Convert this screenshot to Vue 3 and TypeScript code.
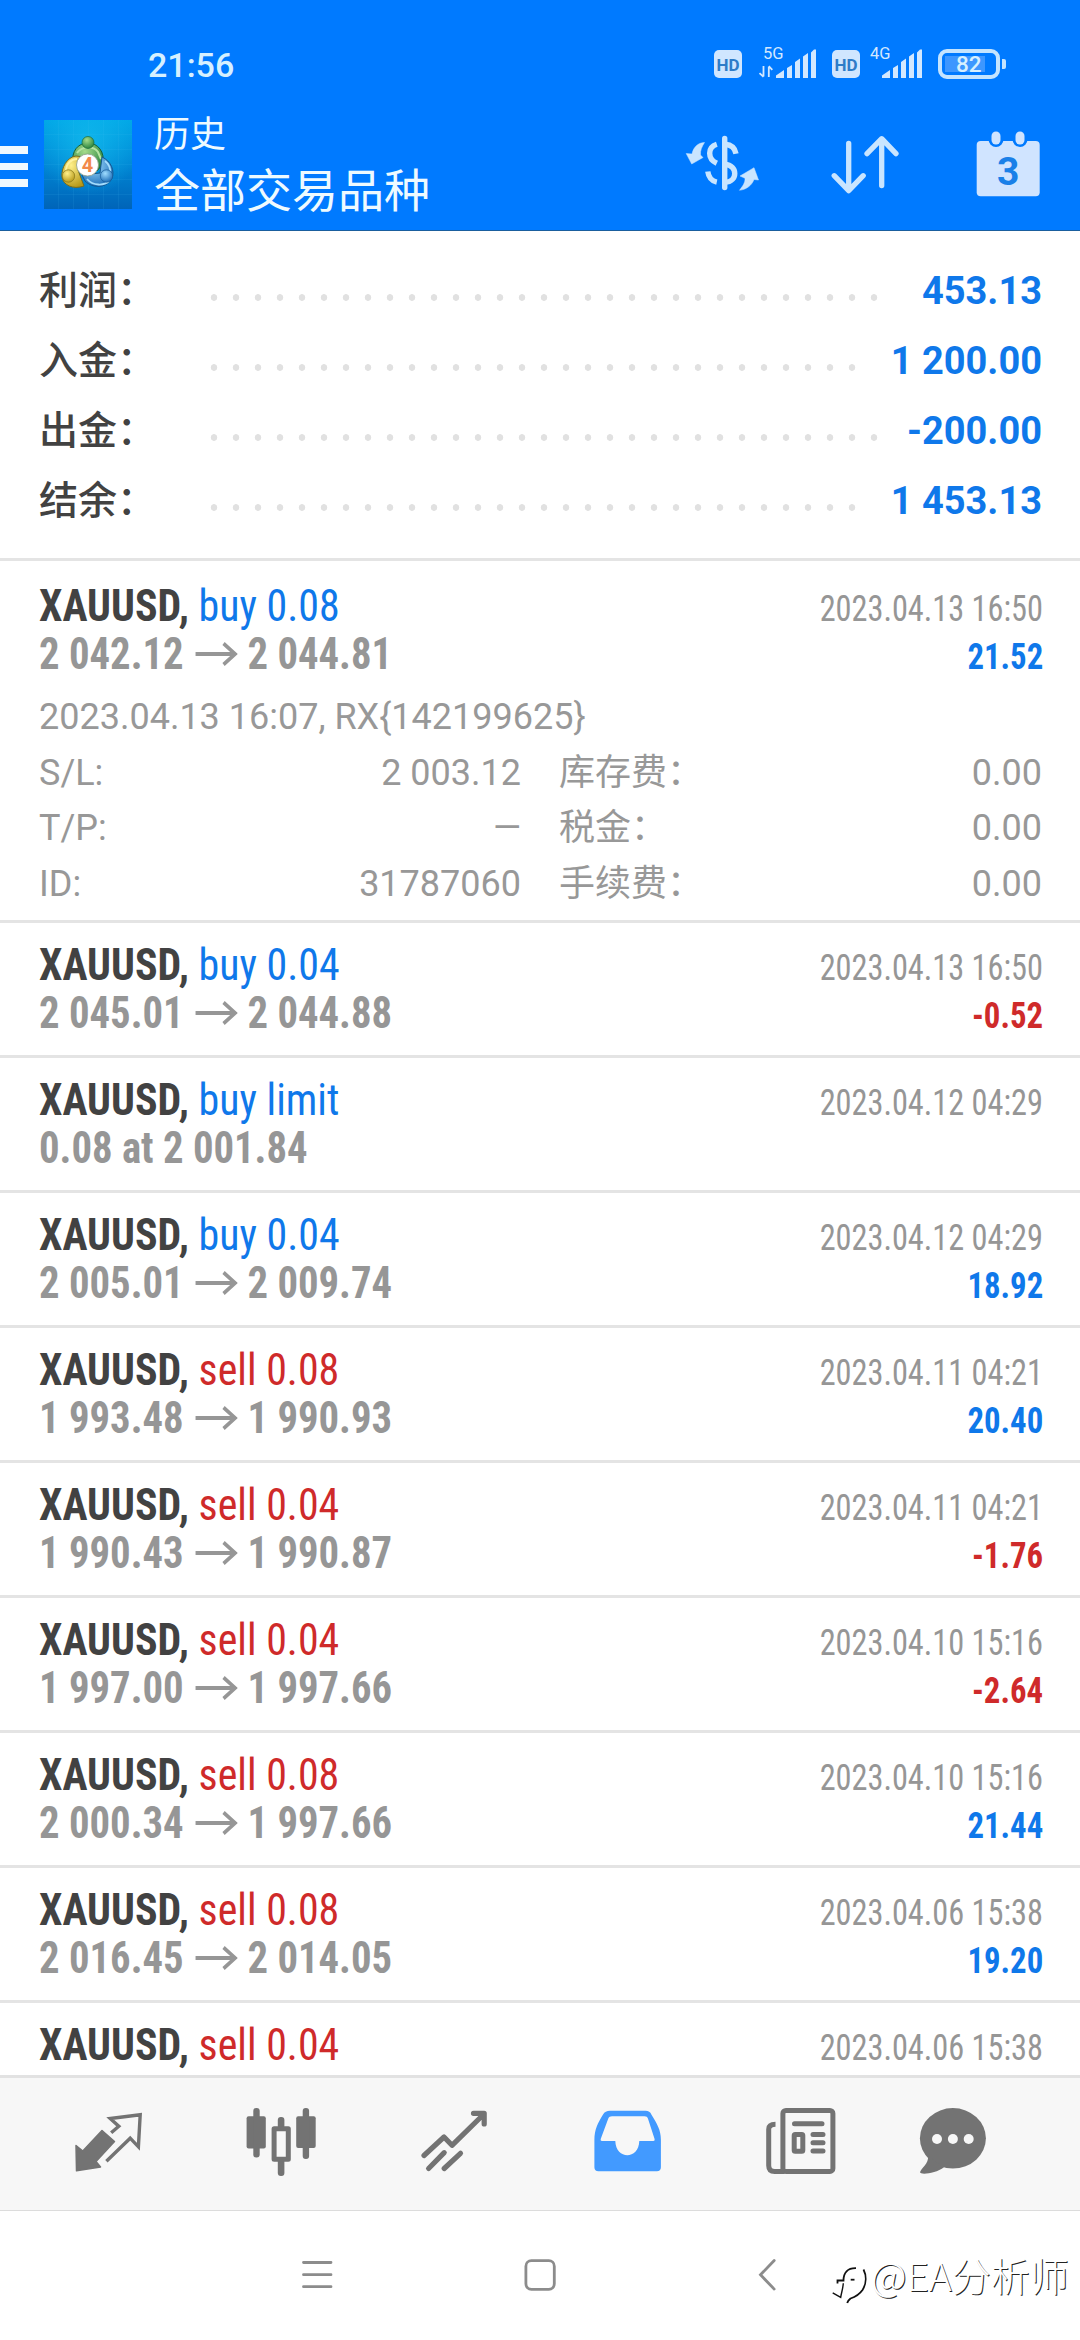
<script setup lang="ts">
interface SummaryLine {
  label: string
  value: string
  dots: number
}

interface Detail {
  label: string
  value: string
}

interface Deal {
  symbol: string
  action: string
  side: 'buy' | 'sell'
  from?: string
  to?: string
  time: string
  profit?: string
  comment?: string
  details?: Detail[]
}

const DOT_PITCH = 22

const summary: SummaryLine[] = [
  { label: '利润：', value: '453.13', dots: 31 },
  { label: '入金：', value: '1 200.00', dots: 30 },
  { label: '出金：', value: '-200.00', dots: 31 },
  { label: '结余：', value: '1 453.13', dots: 30 },
]

const deals: Deal[] = [
  {
    symbol: 'XAUUSD', action: 'buy 0.08', side: 'buy', from: '2 042.12', to: '2 044.81',
    time: '2023.04.13 16:50', profit: '21.52',
    comment: '2023.04.13 16:07, RX{142199625}',
    details: [
      { label: 'S/L:', value: '2 003.12' },
      { label: '库存费：', value: '0.00' },
      { label: 'T/P:', value: '—' },
      { label: '税金：', value: '0.00' },
      { label: 'ID:', value: '31787060' },
      { label: '手续费：', value: '0.00' },
    ],
  },
  { symbol: 'XAUUSD', action: 'buy 0.04', side: 'buy', from: '2 045.01', to: '2 044.88', time: '2023.04.13 16:50', profit: '-0.52' },
  { symbol: 'XAUUSD', action: 'buy limit', side: 'buy', from: '0.08 at 2 001.84', time: '2023.04.12 04:29' },
  { symbol: 'XAUUSD', action: 'buy 0.04', side: 'buy', from: '2 005.01', to: '2 009.74', time: '2023.04.12 04:29', profit: '18.92' },
  { symbol: 'XAUUSD', action: 'sell 0.08', side: 'sell', from: '1 993.48', to: '1 990.93', time: '2023.04.11 04:21', profit: '20.40' },
  { symbol: 'XAUUSD', action: 'sell 0.04', side: 'sell', from: '1 990.43', to: '1 990.87', time: '2023.04.11 04:21', profit: '-1.76' },
  { symbol: 'XAUUSD', action: 'sell 0.04', side: 'sell', from: '1 997.00', to: '1 997.66', time: '2023.04.10 15:16', profit: '-2.64' },
  { symbol: 'XAUUSD', action: 'sell 0.08', side: 'sell', from: '2 000.34', to: '1 997.66', time: '2023.04.10 15:16', profit: '21.44' },
  { symbol: 'XAUUSD', action: 'sell 0.08', side: 'sell', from: '2 016.45', to: '2 014.05', time: '2023.04.06 15:38', profit: '19.20' },
  { symbol: 'XAUUSD', action: 'sell 0.04', side: 'sell', time: '2023.04.06 15:38' },
]

const isLoss = (profit: string) => profit.startsWith('-')
</script>

<template>
  <div class="screen">
    <header class="header">
      <div class="status">
        <span class="clock">21:56</span>
        <div class="indicators">
          <span class="hd">HD</span>
          <div class="signal">
            <span class="net">5G</span>
            <svg width="60" height="32" viewBox="757 47 60 32">
              <path d="M763.5 66v10.5M763.5 76.8l-4-3.6M768.8 77V66.8M768.8 66.2l3.5 3.6" stroke="#d3e8ff" stroke-width="1.8" fill="none" />
              <path d="M776 78v-2.500l8-5.500v8zM787 78V68l5-3v13zM795 78V62l5-3.500V78zM803 78V56.500l5-3.500V78zM811 78V52.500l3-3h2V78z" fill="#d3e8ff" />
            </svg>
          </div>
          <span class="hd hd-second">HD</span>
          <div class="signal">
            <span class="net net-4g">4G</span>
            <svg width="60" height="32" viewBox="757 47 60 32">
              <path d="M776 78v-2.500l8-5.500v8zM787 78V68l5-3v13zM795 78V62l5-3.500V78zM803 78V56.500l5-3.500V78zM811 78V52.500l3-3h2V78z" fill="#d3e8ff" />
            </svg>
          </div>
          <div class="battery"><span class="level">82</span></div>
          <i class="nub"></i>
        </div>
      </div>

      <div class="toolbar">
        <div class="menu"><i></i><i></i><i></i></div>
        <svg class="logo" width="88" height="89" viewBox="0 0 88 89">
          <defs>
            <linearGradient id="sky" x1="0" y1="0" x2="0" y2="1">
              <stop offset="0" stop-color="#00a6e6" />
              <stop offset="0.5" stop-color="#0086d4" />
              <stop offset="1" stop-color="#0064b8" />
            </linearGradient>
            <radialGradient id="glow" cx="0.5" cy="0.25" r="0.6">
              <stop offset="0" stop-color="#16c0f0" stop-opacity="0.7" />
              <stop offset="1" stop-color="#16c0f0" stop-opacity="0" />
            </radialGradient>
            <radialGradient id="green" cx="0.4" cy="0.3" r="0.75"><stop offset="0" stop-color="#a5dc8c" /><stop offset="1" stop-color="#23803a" /></radialGradient>
            <radialGradient id="gold" cx="0.4" cy="0.3" r="0.75"><stop offset="0" stop-color="#fff08a" /><stop offset="1" stop-color="#b59716" /></radialGradient>
            <radialGradient id="blue" cx="0.4" cy="0.3" r="0.75"><stop offset="0" stop-color="#9fdcff" /><stop offset="1" stop-color="#1668b4" /></radialGradient>
          </defs>
          <rect width="88" height="89" fill="url(#sky)" />
          <rect width="88" height="89" fill="url(#glow)" />
          <path d="M14.500 0v89M29.500 0v89M44.500 0v89M59.500 0v89M74.500 0v89M0 14.500h88M0 29.500h88M0 44.500h88M0 59.500h88M0 74.500h88" stroke="#4cc4f5" stroke-opacity="0.1" />
          <path d="M29 44C27 31 34 23 44 23s17 9 15 21l-6 7-9-16z" fill="url(#green)" stroke="#155f38" stroke-width="1" />
          <path d="M33 33c4-6 16-8 21-1l3 7" fill="none" stroke="#b5e3a2" stroke-width="2" />
          <path d="M40 66c-11 4-21-1-22-9-1-9 5-20 14-21l9 1-7 13z" fill="url(#gold)" stroke="#746b20" stroke-width="1" />
          <path d="M22 51c0-7 5-12 11-12" fill="none" stroke="#fff2a0" stroke-width="2" />
          <path d="M58 37c9 4 13 14 10 21-4 10-19 11-27 3l-3-6 18-2z" fill="url(#blue)" stroke="#15568f" stroke-width="1" />
          <path d="M43 59c6 7 17 7 22 2M61 41c4 3 6 8 5 12" fill="none" stroke="#a4dcfb" stroke-width="1.800" />
          <circle cx="44" cy="22.500" r="6" fill="url(#green)" stroke="#1c6a38" stroke-width="0.700" />
          <circle cx="24.500" cy="56" r="6.200" fill="url(#gold)" stroke="#85751b" stroke-width="0.700" />
          <circle cx="62.500" cy="56" r="6.200" fill="url(#blue)" stroke="#175a96" stroke-width="0.700" />
          <circle cx="43.500" cy="45" r="11" fill="#fff" stroke="#8b9c86" stroke-width="0.800" />
          <text x="43.500" y="52" text-anchor="middle" class="logo-digit">4</text>
        </svg>
        <div class="titles">
          <div class="title">历史</div>
          <div class="subtitle">全部交易品种</div>
        </div>
        <div class="actions">
          <svg width="76" height="70" viewBox="684 130 76 70">
            <g fill="none" stroke="#c9e5ff" stroke-width="5.400">
              <path d="M724.700 138.500v49" stroke-linecap="round" />
              <path d="M716.800 144.200c-9.500 3-9.500 14.500 0 19" />
              <path d="M707.800 171.500c.6 5 3.700 9.500 9 10.600" />
              <path d="M725 144.300c6 .5 10 3.500 11 9.500" />
              <path d="M725 164.500c13 .5 13 17.500 0 17.800" />
            </g>
            <g fill="#c9e5ff" stroke="#c9e5ff" stroke-width="0.500" stroke-linejoin="round">
              <path d="M704.500 142.500c-6 .3-11 4-12.500 11.500l-5.800-.5 5.500 10.500 11.300-6.500-2.500-2.500c-.5-4.500 1.500-8.500 4-12.500z" />
              <path d="M739.500 190.300c6.500-.8 12-4.300 14.500-10.800l4.500.5-4.500-12.300-14 8.300 5 2.300c.3 4.500-2.500 8-5.500 12z" />
            </g>
          </svg>
          <svg width="76" height="70" viewBox="827 130 76 70">
            <g fill="none" stroke="#c9e5ff" stroke-width="5.300" stroke-linecap="round" stroke-linejoin="round">
              <path d="M848.700 143.500v46M834.200 175.700l14.500 15 14.500-15" />
              <path d="M881.700 185.500v-46M867 153.700l14.700-15 14.300 15" />
            </g>
          </svg>
          <svg width="76" height="70" viewBox="970 130 76 70">
            <rect x="976.700" y="141" width="63" height="55.300" rx="4" fill="#d0e4ff" />
            <rect x="988.500" y="127" width="15" height="20" rx="7.500" fill="#007aff" />
            <rect x="1012.500" y="127" width="15" height="20" rx="7.500" fill="#007aff" />
            <rect x="991.500" y="131.500" width="9" height="13" rx="4.500" fill="#d0e4ff" />
            <rect x="1015.500" y="131.500" width="9" height="13" rx="4.500" fill="#d0e4ff" />
            <text x="1008.300" y="184.500" text-anchor="middle" class="cal-digit">3</text>
          </svg>
        </div>
      </div>
    </header>

    <section class="summary">
      <div v-for="line in summary" :key="line.label" class="sum-line">
        <span class="sum-label">{{ line.label }}</span>
        <i class="dots" :style="{ width: line.dots * DOT_PITCH + 'px' }"></i>
        <span class="sum-value">{{ line.value }}</span>
      </div>
    </section>

    <main class="list">
      <article v-for="(deal, i) in deals" :key="i" class="deal">
        <div class="line">
          <span class="name">{{ deal.symbol }}, <span :class="deal.side">{{ deal.action }}</span></span>
          <span class="time">{{ deal.time }}</span>
        </div>
        <div v-if="deal.from" class="line">
          <span class="prices">
            <span>{{ deal.from }}</span>
            <template v-if="deal.to">
              <svg class="arrow" width="46" height="26" viewBox="0 0 46 26">
                <path d="M0 13h43M30.500 2.500l12.500 10.500-12.500 10.500" fill="none" stroke="#969696" stroke-width="3.800" />
              </svg>
              <span>{{ deal.to }}</span>
            </template>
          </span>
          <span v-if="deal.profit" class="profit" :class="{ loss: isLoss(deal.profit) }">{{ deal.profit }}</span>
        </div>
        <template v-if="deal.details">
          <div class="comment">{{ deal.comment }}</div>
          <div class="details">
            <div v-for="d in deal.details" :key="d.label" class="detail">
              <span>{{ d.label }}</span><span>{{ d.value }}</span>
            </div>
          </div>
        </template>
      </article>
    </main>

    <nav class="tabs">
      <svg width="80" height="80" viewBox="68 24 80 80">
        <path d="M76 67.500l6.800 5.500 19.200-20.500 12.500 11-18.500 20 4.500 5.500-24 3.800z" fill="#737373" stroke="#737373" stroke-width="1.500" stroke-linejoin="round" />
        <path d="M106.400 82.700l23.800-23 8.200 8.600 1.800-32-30 3.700 8.600 7.700-7.600 6.600" transform="translate(0 .5)" fill="none" stroke="#737373" stroke-width="3.400" />
      </svg>
      <svg width="80" height="80" viewBox="241 24 80 80">
        <g fill="#737373">
          <rect x="246.600" y="38.300" width="19.200" height="32.200" rx="2" />
          <rect x="253.300" y="30" width="6.400" height="49.500" rx="3" />
          <rect x="296.200" y="38.300" width="19.500" height="31.700" rx="2" />
          <rect x="302.700" y="30" width="6.400" height="51" rx="3" />
          <rect x="277.800" y="39" width="6.600" height="12" rx="3" />
          <rect x="277.800" y="80" width="6.600" height="18" rx="3" />
        </g>
        <rect x="274.100" y="50.800" width="14.200" height="30.400" fill="none" stroke="#737373" stroke-width="5" stroke-linejoin="round" />
      </svg>
      <svg width="80" height="80" viewBox="414 24 80 80">
        <g fill="none" stroke="#737373" stroke-width="5.200" stroke-linecap="round" stroke-linejoin="round">
          <path d="M424 77.500l20-18.500 8 8.300L484 36M473.500 35.300h10.700V46" />
          <path d="M444.200 74.700L428.600 90.500M460.500 75.300L444.200 90.500" />
        </g>
      </svg>
      <svg width="80" height="80" viewBox="587 24 80 80">
        <path fill-rule="evenodd" fill="#429aff" d="M610 32.700h35.500c3 0 4.700 1 6 4 5.500 9 9.400 15 9.400 25v27.600c0 2.500-1.500 4-4 4h-58.500c-2.500 0-4-1.500-4-4V61.700c0-10 3.500-17 8.500-25 1.700-3 3.800-4 7.100-4zM612 38.300c-2 0-3 .7-3.800 2.500l-7.400 20c-.4 1.400 0 2.200 1.200 2.200h13.300c.5 19 23.500 19 24 0h14c1.200 0 1.600-.8 1.200-2.200l-6.500-20c-.7-1.800-1.500-2.500-3.500-2.500z" />
      </svg>
      <svg width="80" height="80" viewBox="760 24 80 80">
        <g fill="none" stroke="#737373">
          <rect x="782.900" y="32.400" width="50" height="61" rx="3" stroke-width="5" />
          <path d="M775.500 46.200c-5 0-6.800 2-6.800 5v36.300c0 4 2 6 6 6h10" stroke-width="5" />
          <path d="M794.500 45.700h27.500M813 56.400h10M813 64.700h10M813 73h10" stroke-width="5" stroke-linecap="round" />
          <rect x="794.200" y="56.500" width="8.600" height="16.700" rx="1" stroke-width="5" />
        </g>
      </svg>
      <svg class="chat" width="80" height="80" viewBox="912 24 80 80">
        <ellipse cx="952.900" cy="60.300" rx="33" ry="30.200" fill="#737373" />
        <path d="M928 78c1 8-7 12-8 16.300.5 3 16 1.200 24-5z" fill="#737373" />
        <g fill="#f7f7f7"><circle cx="937" cy="61" r="5" /><circle cx="952.900" cy="61" r="5" /><circle cx="968.700" cy="61" r="5" /></g>
      </svg>
    </nav>

    <footer class="sysbar">
      <svg width="36" height="36" viewBox="299 2257 36 36"><path d="M303.500 2262.500h27.500M303.500 2274.700h27.500M303.500 2286.700h27.500" stroke="#8c8c8c" stroke-width="2.800" stroke-linecap="round" /></svg>
      <svg width="36" height="36" viewBox="522 2257 36 36"><rect x="525.900" y="2260.700" width="28.400" height="28.600" rx="5.500" fill="none" stroke="#8c8c8c" stroke-width="2.800" /></svg>
      <svg width="36" height="36" viewBox="749 2257 36 36"><path d="M774.200 2260.500l-13.700 14.300 13.700 14.300" fill="none" stroke="#8c8c8c" stroke-width="2.800" stroke-linecap="round" /></svg>
      <div class="watermark">
        <svg width="38" height="42" viewBox="830 2264 38 42">
          <g fill="none" stroke="#111" stroke-width="1.800">
            <path d="M837.500 2283.500v-3h6c0-8 4-12.500 12.500-12.300" />
            <path d="M863.500 2269.500c3 6 3 14-1 20.500-3.500 5-7.500 7-12 8.500-2 1.500-2.800 2.500-3.300 4.500" />
            <path d="M843.300 2283.300c-.3 5-1.800 9-2.600 14l-8-4.500" stroke-width="1.400" />
            <path d="M850.700 2279.700h3.800" />
          </g>
        </svg>
        <span class="mark-text">@EA分析师</span>
      </div>
    </footer>
  </div>
</template>

<style>
body {
  background: #fff;
}
</style>

<style scoped>
.screen {
  width: 1080px;
  height: 2340px;
  display: flex;
  flex-direction: column;
  overflow: hidden;
  background: #fff;
  font-family: Roboto, "Noto Sans CJK SC", sans-serif;
}
svg {
  display: block;
  flex: none;
}
i {
  display: block;
}
.header {
  height: 231px;
  flex: none;
  box-sizing: border-box;
  background: #007aff;
  border-bottom: 1px solid #1a5f9e;
}
.status {
  height: 110px;
  box-sizing: border-box;
  padding: 44px 74px 0 148px;
  display: flex;
  justify-content: space-between;
}
.clock {
  font-size: 34px;
  font-weight: 500;
  line-height: 42px;
  color: #d6f0ff;
}
.indicators {
  display: flex;
  align-items: flex-start;
  padding-top: 3px;
}
.hd {
  width: 28px;
  height: 28px;
  margin-top: 3px;
  border-radius: 5px;
  background: #d0e6ff;
  color: #2e7cc8;
  font-size: 17px;
  font-weight: 700;
  line-height: 30px;
  text-align: center;
}
.hd-second {
  margin-left: 15px;
}
.signal {
  display: grid;
  margin-left: 15px;
}
.hd-second + .signal {
  margin-left: 3px;
}
.signal > * {
  grid-area: 1 / 1;
}
.net {
  margin-left: 6px;
  font-size: 16.5px;
  line-height: 14px;
  color: #d3e8ff;
}
.net-4g {
  margin-left: 7px;
}
.battery {
  width: 62px;
  height: 30px;
  margin: 2px 2px 0 15px;
  box-sizing: border-box;
  border: 4px solid #c4e4ff;
  border-radius: 9px;
  padding: 3px;
}
.level {
  display: block;
  width: 40px;
  height: 16px;
  box-sizing: border-box;
  padding-left: 11px;
  background: #3d97ff;
  color: #d6f0ff;
  font-size: 22.5px;
  font-weight: 500;
  line-height: 17px;
}
.nub {
  width: 4px;
  height: 10px;
  margin-top: 12px;
  border-radius: 0 2px 2px 0;
  background: #c4e4ff;
}
.toolbar {
  height: 120px;
  display: flex;
  align-items: flex-start;
}
.menu {
  width: 28px;
  margin-right: 16px;
  padding-top: 36px;
  display: flex;
  flex-direction: column;
  gap: 9px;
}
.menu i {
  height: 7.7px;
  background: #f0f9ff;
}
.logo {
  margin-top: 10px;
}
.logo-digit {
  font: 700 20px Roboto, sans-serif;
  fill: #f2894a;
}
.cal-digit {
  font: 700 39px Roboto, sans-serif;
  fill: #1a80e8;
}
.titles {
  margin: 1px 0 0 22px;
  color: #eefaff;
  font-weight: 400;
}
.title {
  font-size: 36px;
  line-height: 48px;
}
.subtitle {
  font-size: 46px;
  line-height: 64px;
}
.actions {
  margin: 20px 34px 0 auto;
  display: flex;
  gap: 67px;
}
.summary {
  height: 327px;
  flex: none;
  box-sizing: border-box;
  padding: 25px 38px 0 39px;
}
.sum-line {
  height: 70px;
  display: flex;
  font-size: 39px;
  line-height: 70px;
}
.sum-label {
  width: 164px;
  color: #424242;
  font-weight: 500;
}
.dots {
  height: 7px;
  margin-top: 38px;
  background: radial-gradient(circle at center, #e1e1e1 3px, transparent 3.6px) 0 0 / 22px 7px repeat-x;
}
.sum-value {
  margin-left: auto;
  color: #0f78ea;
  font-size: 38px;
  font-weight: 700;
}
.list {
  height: 1517px;
  flex: none;
  overflow: hidden;
}
.deal {
  height: 135px;
  box-sizing: border-box;
  padding: 18px 37px 0 39px;
  border-top: 3px solid #e4e4e4;
}
.deal:last-child {
  height: 75px;
}
.deal:first-child {
  height: 362px;
  padding-top: 21px;
}
.line {
  height: 48px;
  display: flex;
  justify-content: space-between;
  align-items: baseline;
  font-family: "Roboto Condensed", Roboto, sans-serif;
  font-stretch: 75%;
  line-height: 48px;
  white-space: nowrap;
}
.name {
  font-size: 44px;
  font-weight: 700;
  color: #424242;
  transform: scaleX(0.952);
  transform-origin: left;
}
.name span {
  font-weight: 400;
}
.buy {
  color: #0f78ea;
}
.sell {
  color: #cf2a2a;
}
.time {
  font-size: 36px;
  color: #969696;
  transform: scaleX(0.897);
  transform-origin: right;
}
.prices {
  display: flex;
  align-items: center;
  font-size: 44px;
  font-weight: 700;
  color: #969696;
  transform: scaleX(0.925);
  transform-origin: left;
}
.arrow {
  margin: 0 10px 0 13px;
}
.profit {
  font-size: 36px;
  font-weight: 700;
  color: #0f78ea;
  transform: scaleX(0.91);
  transform-origin: right;
}
.loss {
  color: #cf2a2a;
}
.comment,
.details {
  font-size: 36px;
  font-weight: 400;
  line-height: 55.5px;
  color: #989898;
}
.comment {
  margin-top: 12px;
}
.details {
  display: grid;
  grid-template-columns: 482px 483px;
  grid-auto-rows: 55.5px;
  column-gap: 38px;
}
.detail {
  display: flex;
  justify-content: space-between;
}
.tabs {
  height: 136px;
  flex: none;
  box-sizing: border-box;
  padding: 24px 0 0 68px;
  display: flex;
  gap: 93px;
  background: #f7f7f7;
  border-top: 3px solid #e2e2e2;
  border-bottom: 1px solid #dcdcdc;
}
.chat {
  margin-left: -21px;
}
.sysbar {
  flex: 1;
  display: flex;
  align-items: flex-start;
  padding: 46px 0 0 299px;
}
.sysbar > svg + svg {
  margin-left: 187px;
}
.sysbar > svg:nth-child(3) {
  margin-left: 191px;
}
.watermark {
  display: flex;
  margin: 7px 0 0 45px;
}
.mark-text {
  margin: -18px 0 0 3px;
  font-family: "Noto Sans CJK SC", sans-serif;
  font-size: 39px;
  font-weight: 300;
  line-height: 56px;
  color: #fff;
  text-shadow: 1px 1px 0 #222;
  white-space: nowrap;
}
</style>
